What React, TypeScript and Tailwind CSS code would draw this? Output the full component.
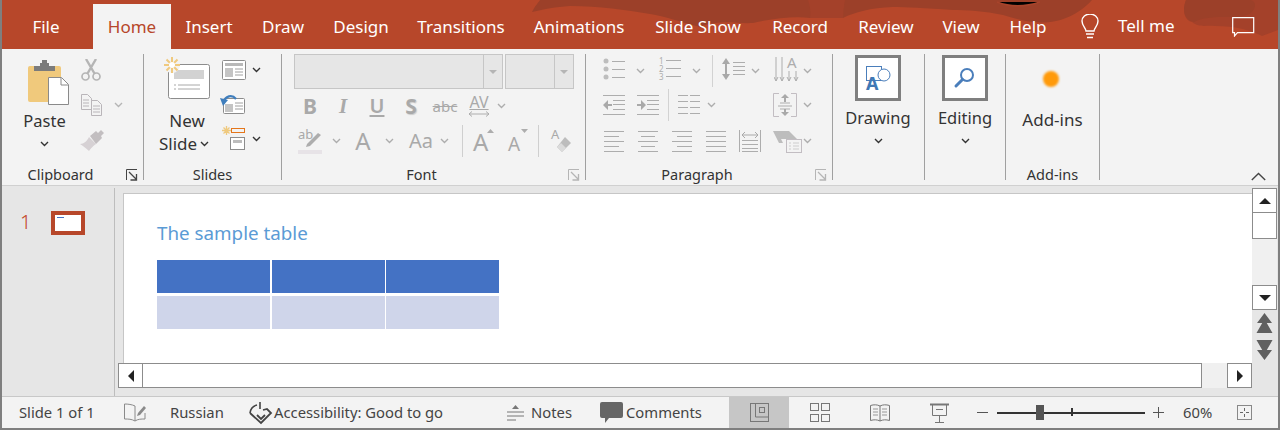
import React from 'react';

const G = '#adadad';

type IcoProps = { w: number; h: number; className?: string; children: React.ReactNode };

const Ico: React.FC<IcoProps> = ({ w, h, className, children }) => (
  <svg width={w} height={h} viewBox={`0 0 ${w} ${h}`} fill="none" className={`block shrink-0 ${className ?? ''}`}>
    {children}
  </svg>
);

const Chev: React.FC<{ className?: string; color?: string }> = ({ className, color = G }) => (
  <Ico w={9} h={6} className={className}>
    <path d="M1 1l3.5 3.5L8 1" stroke={color} strokeWidth="1.4" />
  </Ico>
);

const Launcher: React.FC<{ color: string; className?: string }> = ({ color, className }) => (
  <Ico w={12} h={12} className={className}>
    <path d="M.5 11V.5H11M5 .5" stroke={color} />
    <path d="M3 3l7 7M10.5 5v6h-6" stroke={color} strokeWidth="1.3" />
  </Ico>
);

const Lines: React.FC<{ x?: number; w: number; ys: number[]; color?: string }> = ({ x = 0, w, ys, color = G }) => (
  <>
    {ys.map((y) => (
      <path key={y} d={`M${x} ${y + 0.5}h${w}`} stroke={color} />
    ))}
  </>
);

const Sep: React.FC = () => <div className="w-px h-[126px] bg-[#a0a0a0] shrink-0" />;

const Group: React.FC<{ label: string; width: string; launcher?: string; children: React.ReactNode }> = ({
  label,
  width,
  launcher,
  children,
}) => (
  <div className={`${width} h-[129px] flex flex-col shrink-0`}>
    <div className="h-[111px] flex">{children}</div>
    <div className={`h-[18px] flex items-center relative ${launcher ? 'pr-[24px]' : ''}`}>
      <span className="w-full text-center text-[14.5px] leading-[18px] text-[#333333]">{label}</span>
      {launcher && <Launcher color={launcher} className="absolute right-[5px] top-[4px]" />}
    </div>
  </div>
);

const PasteIcon = () => (
  <Ico w={41} h={45}>
    <path d="M0 8a2 2 0 012-2h29a2 2 0 012 2v34H2a2 2 0 01-2-2z" fill="#f0c97c" />
    <path d="M6 6h6V3h2V0h5v3h2v3h6v5H6z" fill="#7b7b7b" />
    <path d="M20.500 17.500h13l7 7v20h-20z" fill="#fff" stroke="#8a8a8a" />
    <path d="M33 18v7h7" stroke="#8a8a8a" />
  </Ico>
);

const CutIcon = () => (
  <Ico w={20} h={22}>
    <circle cx="4.500" cy="17.500" r="3.500" stroke="#b5b5b5" strokeWidth="1.700" />
    <circle cx="15.500" cy="17.500" r="3.500" stroke="#b5b5b5" strokeWidth="1.700" />
    <path d="M6.500 14.500L15 0M13.500 14.500L5 0" stroke="#b5b5b5" strokeWidth="2.400" />
  </Ico>
);

const CopyIcon = () => (
  <Ico w={21} h={22}>
    <path d="M.5.500h6l4 4v11h-10z" stroke="#b9b5b9" fill="#f3f3f3" />
    <path d="M2 6h6M2 9h6M2 12h6" stroke="#b9b5b9" />
    <path d="M10.500 6.500h6l4 4v11h-10z" stroke="#b9b5b9" fill="#f3f3f3" />
    <path d="M12 12h7M12 15h7M12 18h7" stroke="#b9b5b9" />
  </Ico>
);

const BrushIcon = () => (
  <Ico w={24} h={21}>
    <path d="M0 14c4 0 7-3 9-7l7 7c-3 2-5 4-7 7-3-3-6-5-9-7z" fill="#d6d1d4" />
    <path d="M10 6l6-5 2 2 3-3 3 3-3 3 1 2-6 6z" fill="#c2bec0" />
  </Ico>
);

const NewSlideIcon = () => (
  <Ico w={47} h={42}>
    <rect x="4.500" y="7.500" width="41" height="34" rx="2" fill="#fff" stroke="#8c8c8c" />
    <rect x="10" y="13" width="30" height="9" fill="#d2d2d2" />
    <path d="M10 28h2M14 28h22M10 32h2M14 32h22" stroke="#a8a8a8" />
    <circle cx="8" cy="8" r="8" fill="#f3f3f3" />
    <g stroke="#efc97e" strokeWidth="2">
      <path d="M8 0v16M0 8h16M2.500 2.500l11 11M13.500 2.500l-11 11" />
    </g>
    <circle cx="8" cy="8" r="3" fill="#fff" />
  </Ico>
);

const LayoutIcon = () => (
  <Ico w={24} h={20}>
    <rect x=".5" y=".5" width="23" height="19" rx="1" fill="#fff" stroke="#8c8c8c" />
    <rect x="3" y="3" width="18" height="3" fill="#b8b8b8" />
    <rect x="3" y="8" width="8" height="9" fill="#c4c4c4" />
    <path d="M13 9h8M13 12h8M13 15h8" stroke="#a0a0a0" />
  </Ico>
);

const ResetIcon = () => (
  <Ico w={25} h={21}>
    <rect x="3.500" y="5.500" width="21" height="15" rx="1" fill="#fff" stroke="#8c8c8c" />
    <rect x="5" y="11" width="8" height="8" fill="#c4c4c4" />
    <path d="M15 10h8M15 13h8M15 16h8" stroke="#a0a0a0" />
    <path d="M4 9C5 3 12 1 16 6" stroke="#3f7ebd" strokeWidth="2.200" fill="none" />
    <path d="M0 5l8 2-5 6z" fill="#3f7ebd" />
  </Ico>
);

const SectionIcon = () => (
  <Ico w={24} h={24}>
    <g stroke="#efc97e" strokeWidth="1.300">
      <path d="M4.500 0v9M0 4.500h9M1.500 1.500l6 6M7.500 1.500l-6 6" />
    </g>
    <rect x="9.500" y="2.500" width="13" height="4" stroke="#e4761b" />
    <rect x="8.500" y="11.500" width="14" height="12" fill="#fff" stroke="#8c8c8c" />
    <rect x="11" y="14" width="9" height="3" fill="#bcbcbc" />
  </Ico>
);

const FontRow2 = () => (
  <div className="flex items-center h-[24px] mt-[5px] text-[#a9a9a9]">
    <span className="ml-[20px] w-[16px] text-center text-[21px] leading-[24px] font-bold">B</span>
    <span className="ml-[18px] w-[14px] text-center text-[21px] leading-[24px] italic font-['Liberation_Serif',serif] font-bold">I</span>
    <span className="ml-[19px] w-[16px] text-center text-[20px] leading-[24px] font-semibold underline underline-offset-2">U</span>
    <span className="ml-[18px] w-[16px] text-center text-[21px] leading-[24px] font-bold [text-shadow:1px_1px_1px_#cccccc]">S</span>
    <span className="ml-[13px] w-[26px] text-center text-[15px] leading-[24px] line-through">abc</span>
    <div className="ml-[10px] w-[22px] flex flex-col items-center">
      <span className="text-[16px] leading-[15px] underline">AV</span>
      <Ico w={22} h={6} className="mt-[1px]">
        <path d="M1 3h20M4 .5L1 3l3 2.500M18 .5L21 3l-3 2.500" stroke={G} />
      </Ico>
    </div>
    <Chev className="ml-[7px]" />
  </div>
);

const FontRow3 = () => (
  <div className="flex items-center h-[33px] mt-[6px] text-[#a9a9a9]">
    <div className="ml-[16px] w-[24px] relative h-[27px]">
      <span className="absolute left-0 top-[-1px] text-[13px] leading-[16px]">ab</span>
      <Ico w={24} h={27} className="absolute left-0 top-0">
        <path d="M9 17l11-11 3 2-11 11-4 1z" fill={G} />
        <rect y="23" width="24" height="4" fill="#e7e3e7" />
      </Ico>
    </div>
    <Chev className="ml-[10px]" />
    <span className="ml-[14px] w-[16px] text-center text-[24px] leading-[30px]">A</span>
    <Chev className="ml-[14px]" />
    <span className="ml-[14px] w-[26px] text-center text-[20px] leading-[30px]">Aa</span>
    <Chev className="ml-[6px]" />
    <div className="ml-[13px] w-px h-[32px] bg-[#cfcfcf]" />
    <div className="ml-[10px] w-[21px] h-[30px] relative">
      <span className="absolute left-0 top-0 text-[24px] leading-[32px]">A</span>
      <Ico w={21} h={30} className="absolute left-0 top-0">
        <path d="M14 7l3.500-4 3.500 4z" fill={G} />
      </Ico>
    </div>
    <div className="ml-[14px] w-[21px] h-[30px] relative">
      <span className="absolute left-0 top-[3px] text-[19px] leading-[30px]">A</span>
      <Ico w={21} h={30} className="absolute left-0 top-0">
        <path d="M13 3h7l-3.500 4z" fill={G} />
      </Ico>
    </div>
    <div className="ml-[9px] w-px h-[32px] bg-[#cfcfcf]" />
    <div className="ml-[12px] w-[20px] h-[24px] relative">
      <span className="absolute left-0 top-[-3px] text-[13px] leading-[16px]">A</span>
      <Ico w={20} h={24} className="absolute left-0 top-0">
        <path d="M14 8l6 6-9 9-5-5z" fill="#bdbdbd" />
        <path d="M6 18l4-4 5 5-4 4z" fill="#dbdbdb" />
      </Ico>
    </div>
  </div>
);

const Combo: React.FC<{ width: string; inner: string }> = ({ width, inner }) => (
  <div className={`${width} h-[35px] border border-[#c6c6c6] bg-[#e6e6e6] flex shrink-0`}>
    <div className={inner} />
    <div className="flex-1 border-l border-[#c6c6c6] flex items-center justify-center">
      <div className="w-0 h-0 border-x-[4px] border-x-transparent border-t-[4px] border-t-[#b5b5b5]" />
    </div>
  </div>
);

const FontGroup = () => (
  <Group label="Font" width="w-[303px]" launcher="#b5b5b5">
    <div className="flex flex-col w-full">
      <div className="flex ml-[12px] gap-[2px]">
        <Combo width="w-[209px]" inner="w-[188px]" />
        <Combo width="w-[69px]" inner="w-[48px]" />
      </div>
      <FontRow2 />
      <FontRow3 />
    </div>
  </Group>
);

const BulletIcon = () => (
  <Ico w={23} h={22}>
    <circle cx="3" cy="3" r="2.500" fill="#bdbdbd" />
    <circle cx="3" cy="11" r="2.500" fill="#bdbdbd" />
    <circle cx="3" cy="19" r="2.500" fill="#bdbdbd" />
    <Lines x={9} w={13} ys={[3, 11, 19]} />
  </Ico>
);

const NumberIcon = () => (
  <div className="w-[22px] h-[24px] relative text-[#adadad] text-[8px] leading-[8px]">
    <span className="absolute left-0 top-0">1</span>
    <span className="absolute left-0 top-[8px]">2</span>
    <span className="absolute left-0 top-[16px]">3</span>
    <Ico w={22} h={24}>
      <Lines x={7} w={15} ys={[3, 11, 19]} />
    </Ico>
  </div>
);

const SpacingIcon = () => (
  <Ico w={24} h={24}>
    <path d="M5 1L1 7h8zM5 23l-4-6h8z" fill="#a9a9a9" />
    <path d="M5 6v12" stroke="#a9a9a9" strokeWidth="2" />
    <Lines x={12} w={12} ys={[5, 9, 13, 17]} />
  </Ico>
);

const TextDirIcon = () => (
  <div className="w-[32px] h-[26px] relative">
    <span className="absolute left-[13px] top-[-4px] text-[15px] leading-[18px] text-[#adadad]">A</span>
    <Ico w={32} h={26}>
      <path d="M2 0v24M8 0v24M15 14v10M22 14v10" stroke={G} />
      <path d="M0 20l2 4 2-4M6 20l2 4 2-4M13 20l2 4 2-4M20 20l2 4 2-4" stroke={G} fill="none" />
    </Ico>
  </div>
);

const IndentIcon: React.FC<{ flip?: boolean }> = ({ flip }) => (
  <Ico w={22} h={20}>
    <Lines w={22} ys={[0, 19]} />
    <Lines x={10} w={12} ys={[5, 9, 14]} />
    <path d={flip ? 'M0 9h4V5l5 5-5 5v-4H0z' : 'M9 9H5V5l-5 5 5 5v-4h4z'} fill="#a9a9a9" />
  </Ico>
);

const ColumnsIcon = () => (
  <Ico w={22} h={20}>
    <Lines w={10} ys={[0, 6, 12, 18]} />
    <Lines x={12} w={10} ys={[0, 6, 12, 18]} />
  </Ico>
);

const AlignTextIcon = () => (
  <Ico w={24} h={24}>
    <path d="M6 .5H.5v23H6M18 .5h5.500v23H18" stroke="#c2bdc2" />
    <path d="M7 10h10M5 13h14M7 16h10" stroke={G} />
    <path d="M12 1l-4 4h3v4h2V5h3zM12 23l-4-4h3v-3h2v3h3z" fill="#a9a9a9" />
  </Ico>
);

const AlignIcon: React.FC<{ kind: 'left' | 'center' | 'right' | 'just' }> = ({ kind }) => {
  const rows =
    kind === 'left'
      ? [[0, 20], [0, 15], [0, 20], [0, 15], [0, 20]]
      : kind === 'center'
        ? [[0, 20], [3, 14], [0, 20], [3, 14], [0, 20]]
        : kind === 'right'
          ? [[0, 20], [5, 15], [0, 20], [5, 15], [0, 20]]
          : [[0, 20], [0, 20], [0, 20], [0, 20], [0, 20]];
  return (
    <Ico w={20} h={21}>
      {rows.map(([x, w], i) => (
        <path key={i} d={`M${x} ${i * 5 + 0.5}h${w}`} stroke={G} />
      ))}
    </Ico>
  );
};

const DistributeIcon = () => (
  <Ico w={22} h={22}>
    <path d="M.5 0v22M21.500 0v22" stroke={G} />
    <path d="M3 5h16M6 2L3 5l3 3M16 2l3 3-3 3" stroke="#a9a9a9" />
    <Lines x={3} w={16} ys={[10, 14, 18, 21]} />
  </Ico>
);

const SmartArtIcon = () => (
  <Ico w={31} h={24}>
    <path d="M0 2h16l8 8H8l2 4H6z" fill="#bdbdbd" />
    <rect x="13.500" y="10.500" width="15" height="13" fill="#f3f3f3" stroke="#c2bdc2" />
    <path d="M16 14h2M20 14h6M16 17h2M20 17h6M16 20h2M20 20h6" stroke="#cdcdcd" />
  </Ico>
);

const ParagraphGroup = () => (
  <Group label="Paragraph" width="w-[246px]" launcher="#b5b5b5">
    <div className="flex flex-col w-full">
      <div className="flex items-center h-[34px] mt-[-2px]">
        <div className="ml-[17px]"><BulletIcon /></div>
        <Chev className="ml-[10px] mt-[3px]" />
        <div className="ml-[14px]"><NumberIcon /></div>
        <Chev className="ml-[11px] mt-[3px]" />
        <div className="ml-[11px] w-px h-[32px] bg-[#d2d2d2] mt-[4px]" />
        <div className="ml-[8px]"><SpacingIcon /></div>
        <Chev className="ml-[6px] mt-[3px]" />
        <div className="ml-[14px] mt-[2px]"><TextDirIcon /></div>
        <Chev className="ml-[-3px] mt-[3px]" />
      </div>
      <div className="flex items-center h-[34px] mt-[2px]">
        <div className="ml-[17px]"><IndentIcon /></div>
        <div className="ml-[12px]"><IndentIcon flip /></div>
        <div className="ml-[9px] w-px h-[32px] bg-[#d2d2d2]" />
        <div className="ml-[9px]"><ColumnsIcon /></div>
        <Chev className="ml-[7px]" />
        <div className="ml-[57px]"><AlignTextIcon /></div>
        <Chev className="ml-[6px]" />
      </div>
      <div className="flex items-center h-[34px] mt-[2px]">
        <div className="ml-[18px]"><AlignIcon kind="left" /></div>
        <div className="ml-[14px]"><AlignIcon kind="center" /></div>
        <div className="ml-[14px]"><AlignIcon kind="right" /></div>
        <div className="ml-[14px]"><AlignIcon kind="just" /></div>
        <div className="ml-[13px]"><DistributeIcon /></div>
        <div className="ml-[12px]"><SmartArtIcon /></div>
        <Chev className="ml-[-1px]" />
      </div>
    </div>
  </Group>
);

const BigButton: React.FC<{ label: string; width: string; children: React.ReactNode }> = ({ label, width, children }) => (
  <div className={`${width} h-[129px] flex flex-col items-center shrink-0`}>
    <div className="w-[46px] h-[46px] mt-[1px] border-[3px] border-[#7f7f7f] bg-white flex items-center justify-center">
      {children}
    </div>
    <span className="mt-[5px] text-[16.5px] leading-[24px] text-[#333333]">{label}</span>
    <Chev className="mt-[8px]" color="#333333" />
  </div>
);

const Ribbon = () => (
  <div className="h-[137px] pt-[5px] bg-[#f3f3f3] flex items-start shrink-0 border-b border-[#d0d0d0]">
    <Group label="Clipboard" width="w-[141px]" launcher="#444444">
      <div className="ml-[19px] w-[47px] flex flex-col items-center">
        <div className="mt-[6px] ml-[8px]"><PasteIcon /></div>
        <span className="mt-[5px] text-[16.5px] leading-[22px] text-[#333333]">Paste</span>
        <Chev className="mt-[9px]" color="#333333" />
      </div>
      <div className="ml-[13px] flex flex-col">
        <div className="mt-[5px]"><CutIcon /></div>
        <div className="mt-[13px] flex items-center">
          <CopyIcon />
          <Chev className="ml-[12px]" color="#b5b5b5" />
        </div>
        <div className="mt-[14px] ml-[-1px]"><BrushIcon /></div>
      </div>
    </Group>
    <Sep />
    <Group label="Slides" width="w-[137px]">
      <div className="ml-[19px] w-[48px] flex flex-col items-center">
        <div className="mt-[3px]"><NewSlideIcon /></div>
        <span className="mt-[10px] text-[17px] leading-[23px] text-[#333333]">New</span>
        <div className="flex items-center whitespace-nowrap mr-[6px]">
          <span className="text-[17px] leading-[23px] text-[#333333]">Slide</span>
          <Chev className="ml-[3px]" color="#333333" />
        </div>
      </div>
      <div className="ml-[11px] flex flex-col">
        <div className="mt-[6px] flex items-center">
          <LayoutIcon />
          <Chev className="ml-[6px]" color="#333333" />
        </div>
        <div className="mt-[13px] ml-[-2px]"><ResetIcon /></div>
        <div className="mt-[12px] flex items-center">
          <SectionIcon />
          <Chev className="ml-[6px] mt-[2px]" color="#333333" />
        </div>
      </div>
    </Group>
    <Sep />
    <FontGroup />
    <Sep />
    <ParagraphGroup />
    <Sep />
    <BigButton label="Drawing" width="w-[91px] pr-[1px]">
      <div className="w-[34px] h-[32px] relative">
        <Ico w={34} h={32}>
          <rect x="5.500" y="4.500" width="15" height="14" stroke="#4a7ebb" />
          <circle cx="23" cy="13" r="6" fill="#fff" stroke="#4a7ebb" />
        </Ico>
        <span className="absolute left-[5px] top-[9px] text-[18px] leading-[24px] font-bold text-[#3f78b5]">A</span>
      </div>
    </BigButton>
    <Sep />
    <BigButton label="Editing" width="w-[80px]">
      <Ico w={24} h={24}>
        <circle cx="14" cy="9" r="6" stroke="#4a7ebb" strokeWidth="2" />
        <path d="M9.500 13.500L3 20" stroke="#4a7ebb" strokeWidth="3" strokeLinecap="round" />
      </Ico>
    </BigButton>
    <Sep />
    <Group label="Add-ins" width="w-[93px]">
      <div className="w-full flex flex-col items-center">
        <div className="mt-[17px] mr-[3px] w-[16px] h-[16px] rounded-full bg-[#ff9a0a] blur-[1px]" />
        <span className="mt-[21px] text-[17px] leading-[24px] text-[#333333]">Add-ins</span>
      </div>
    </Group>
    <Sep />
    <Ico w={15} h={9} className="ml-auto mr-[12px] mt-[118px]">
      <path d="M.8 8L7.500 1.500 14.200 8" stroke="#444444" strokeWidth="1.400" />
    </Ico>
  </div>
);

const tabs: { name: string; width: string }[] = [
  { name: 'File', width: 'w-[91px] pr-[3px]' },
  { name: 'Home', width: 'w-[78px]' },
  { name: 'Insert', width: 'w-[76px]' },
  { name: 'Draw', width: 'w-[72px]' },
  { name: 'Design', width: 'w-[84px]' },
  { name: 'Transitions', width: 'w-[116px]' },
  { name: 'Animations', width: 'w-[120px]' },
  { name: 'Slide Show', width: 'w-[118px]' },
  { name: 'Record', width: 'w-[86px]' },
  { name: 'Review', width: 'w-[86px]' },
  { name: 'View', width: 'w-[64px]' },
  { name: 'Help', width: 'w-[70px]' },
];

const TabBar = () => (
  <div className="h-[49px] bg-[#b7472a] relative flex items-end shrink-0">
    <svg width="1276" height="49" viewBox="2 0 1276 49" className="absolute left-0 top-0">
      <path d="M806 0H846L843 18L810 18Z" fill="#a4412a" />
      <path
        d="M532 12C535 6 538 3 540 0H808C810 6 811 12 810 18C795 16 775 18 753 23C735 24 722 19 700 27C680 22 665 16 650 14C625 10 600 6 570 6C555 7 545 9 532 12Z"
        fill="#9c4029"
      />
      <path
        d="M845 0H1092C1085 8 1070 20 1050 22C1035 24 1020 20 1003 15C985 11 965 10 953 10C925 8 905 7 893 7C870 8 855 12 843 18C843 12 844 6 845 0Z"
        fill="#9c4029"
      />
      <path d="M997 2C1010 7 1025 7 1040 2" stroke="#a8442b" strokeWidth="1.500" />
      <path d="M1186 0C1182 10 1184 20 1192 22C1200 28 1205 25 1215 26C1235 26 1250 30 1262 36L1278 30V0Z" fill="#a4412a" />
      <path d="M1186 0C1182 10 1184 20 1194 22C1215 12 1240 22 1252 12C1258 5 1254 0 1250 0Z" fill="#9c4029" />
    </svg>
    <div className="relative flex items-center h-[45px] w-full text-[17px] text-white">
      {tabs.map((t) => (
        <div
          key={t.name}
          className={`${t.width} h-[45px] flex items-center justify-center whitespace-nowrap ${
            t.name === 'Home' ? 'bg-[#f3f3f3] text-[#b7472a]' : ''
          }`}
        >
          {t.name}
        </div>
      ))}
      <Ico w={20} h={25} className="ml-[17px]">
        <path
          d="M6 17c0-3-4-5-4-10a8 7 0 0116 0c0 5-4 7-4 10z"
          stroke="#fff"
          strokeWidth="1.400"
        />
        <path d="M6 20h8M7 23.500h6" stroke="#fff" strokeWidth="1.500" />
      </Ico>
      <span className="ml-[18px] mt-[-1px] whitespace-nowrap">Tell me</span>
      <Ico w={23} h={20} className="ml-[57px]">
        <path d="M.7.700h21v15H5.500L2.500 19v-3.300H.7z" stroke="#fff" strokeWidth="1.200" />
      </Ico>
    </div>
  </div>
);

const ArrowBtn: React.FC<{ dir: 'up' | 'down' | 'left' | 'right'; className?: string }> = ({ dir, className }) => (
  <div
    className={`w-[25px] h-[25px] border border-[#8c8c8c] bg-white flex items-center justify-center shrink-0 ${className ?? ''}`}
  >
    {dir === 'up' && <div className="w-0 h-0 border-x-[6px] border-x-transparent border-b-[6px] border-b-[#222222]" />}
    {dir === 'down' && <div className="w-0 h-0 border-x-[6px] border-x-transparent border-t-[6px] border-t-[#222222]" />}
    {dir === 'left' && <div className="w-0 h-0 border-y-[6px] border-y-transparent border-r-[6px] border-r-[#222222]" />}
    {dir === 'right' && <div className="w-0 h-0 border-y-[6px] border-y-transparent border-l-[6px] border-l-[#222222]" />}
  </div>
);

const VScroll = () => (
  <div className="w-[25px] flex flex-col shrink-0 pt-[2px]">
    <ArrowBtn dir="up" />
    <div className="h-[26px] border border-[#8c8c8c] border-t-0 bg-white" />
    <div className="h-[46px] bg-[#f0f0f0]" />
    <ArrowBtn dir="down" />
    <Ico w={25} h={20} className="mt-[3px]">
      <path d="M12.500 0L20 10H5zM12.500 6L20.500 20H4.500z" fill="#606060" />
    </Ico>
    <Ico w={25} h={20} className="mt-[7px]">
      <path d="M4.500 0h16l-8 14zM5 10h15l-7.500 10z" fill="#606060" />
    </Ico>
  </div>
);

const TableRow: React.FC<{ color: string }> = ({ color }) => (
  <div className="grid grid-cols-3 gap-[1.5px] h-[33px]">
    <div className={color} />
    <div className={color} />
    <div className={color} />
  </div>
);

const Workspace = () => (
  <div className="flex-1 bg-[#e6e6e6] flex min-h-0">
    <div className="w-[112px] shrink-0 flex items-start pt-[22px]">
      <span className="ml-[18px] w-[14px] text-[20px] leading-[28px] font-light text-[#c4492a]">1</span>
      <div className="ml-[17px] mt-[3px] w-[34px] h-[24px] border-[4px] border-[#b7472a] bg-white">
        <div className="mt-[2px] ml-[2px] w-[7px] h-px bg-[#4472c4]" />
      </div>
    </div>
    <div className="w-px bg-[#bdbdbd] mt-[2px]" />
    <div className="flex-1 flex flex-col min-w-0">
      <div className="flex h-[177px] ml-[8px] mr-[1px]">
        <div className="flex-1 mt-[7px] border-l border-t border-[#c6c6c6] bg-white pl-[33px] pt-[25px]">
          <p className="text-[18.8px] leading-[28px] text-[#5b9bd5]">The sample table</p>
          <div className="w-[342px] mt-[13px] flex flex-col gap-[3px]">
            <TableRow color="bg-[#4472c4]" />
            <TableRow color="bg-[#cfd5ea]" />
          </div>
        </div>
        <VScroll />
      </div>
      <div className="flex ml-[3px] mr-[26px]">
        <ArrowBtn dir="left" />
        <div className="flex-1 h-[25px] border border-l-0 border-[#8c8c8c] bg-white" />
        <div className="w-[25px] bg-[#f0f0f0]" />
        <ArrowBtn dir="right" />
      </div>
    </div>
  </div>
);

const StatusBar = () => (
  <div className="h-[32px] bg-[#f3f3f3] border-t border-[#c8c8c8] flex items-center text-[14.8px] text-[#444444] shrink-0 whitespace-nowrap">
    <span className="ml-[17px] w-[78px]">Slide 1 of 1</span>
    <Ico w={23} h={20} className="ml-[27px]">
      <path d="M11 3C8 1.500 4 1 .5 1v15c4 0 7 0 10.500 2 3-2 6-2 10-2v-6M11 3v15" stroke="#8a8a8a" />
      <path d="M14 10l6-7 2 2-6 7-3 1z" fill="#8a8a8a" />
    </Ico>
    <span className="ml-[23px] w-[54px]">Russian</span>
    <Ico w={24} h={24} className="ml-[25px]">
      <path d="M8 4C4 5 1.500 8 1 12M11 1v7" stroke="#444444" strokeWidth="1.600" />
      <path d="M1 12l11 10 10-10-4-4-4 1M8 14l4 4 4-4" stroke="#444444" strokeWidth="1.800" />
    </Ico>
    <span className="ml-[1px] w-[169px]">Accessibility: Good to go</span>
    <Ico w={17} h={17} className="ml-[64px]">
      <path d="M8.500 1L5 5h7z" fill="#777777" />
      <path d="M0 8h17M0 12h17M0 16h9" stroke="#777777" />
    </Ico>
    <span className="ml-[7px] w-[41px]">Notes</span>
    <Ico w={23} h={21} className="ml-[28px]">
      <path d="M2 0h19a2 2 0 012 2v12a2 2 0 01-2 2H9l-4 5v-5H2a2 2 0 01-2-2V2a2 2 0 012-2z" fill="#666666" />
    </Ico>
    <span className="ml-[3px] w-[76px]">Comments</span>
    <div className="ml-[27px] w-[60px] h-[31px] bg-[#c6c6c6] flex items-center justify-center">
      <Ico w={19} h={19}>
        <rect x=".5" y=".5" width="18" height="18" stroke="#777777" />
        <path d="M5.500 1v13H18" stroke="#777777" />
        <rect x="9.500" y="4.500" width="5" height="5" stroke="#777777" />
      </Ico>
    </div>
    <Ico w={20} h={19} className="ml-[21px]">
      <rect x=".5" y=".5" width="8" height="7" stroke="#777777" />
      <rect x="11.500" y=".5" width="8" height="7" stroke="#777777" />
      <rect x=".5" y="11.500" width="8" height="7" stroke="#777777" />
      <rect x="11.500" y="11.500" width="8" height="7" stroke="#777777" />
    </Ico>
    <Ico w={20} h={18} className="ml-[40px]">
      <path d="M.5 1.500C4 .5 7 .5 10 2c3-1.500 6-1.500 9.500-.5v15c-3.500-1-6.500-1-9.500.5-3-1.500-6-1.500-9.500-.5zM10 2v15" stroke="#777777" />
      <path d="M3 5h5M3 8h5M3 11h5M12 5h5M12 8h5M12 11h5" stroke="#999999" />
    </Ico>
    <Ico w={19} h={20} className="ml-[40px]">
      <path d="M0 1.500h19" stroke="#777777" strokeWidth="2" />
      <path d="M2.500 2v10.500h14V2M9.500 13v6M5 19.500h9M6 6.500h7" stroke="#777777" />
    </Ico>
    <Ico w={11} h={3} className="ml-[28px]">
      <path d="M0 1.500h11" stroke="#555555" />
    </Ico>
    <div className="ml-[9px] w-[148px] h-[15px] relative flex items-center">
      <div className="w-full h-[2px] bg-[#333333]" />
      <div className="absolute left-[39px] top-0 w-[8px] h-[15px] bg-[#555555]" />
      <div className="absolute left-[74px] top-[3px] w-[2px] h-[8px] bg-[#333333]" />
    </div>
    <Ico w={11} h={11} className="ml-[8px]">
      <path d="M0 5.500h11M5.500 0v11" stroke="#555555" />
    </Ico>
    <span className="ml-[19px] w-[31px]">60%</span>
    <Ico w={15} h={15} className="ml-[23px]">
      <rect x=".5" y=".5" width="14" height="14" stroke="#888888" />
      <path d="M7.500 3v3M7.500 9v3M3 7.500h3M9 7.500h3" stroke="#666666" />
    </Ico>
  </div>
);

export default function App() {
  return (
    <div className="w-[1280px] h-[430px] border-x-2 border-b-2 border-[#7f7f7f] flex flex-col overflow-hidden bg-[#e6e6e6] font-['Noto_Sans',sans-serif]">
      <TabBar />
      <Ribbon />
      <Workspace />
      <StatusBar />
    </div>
  );
}
